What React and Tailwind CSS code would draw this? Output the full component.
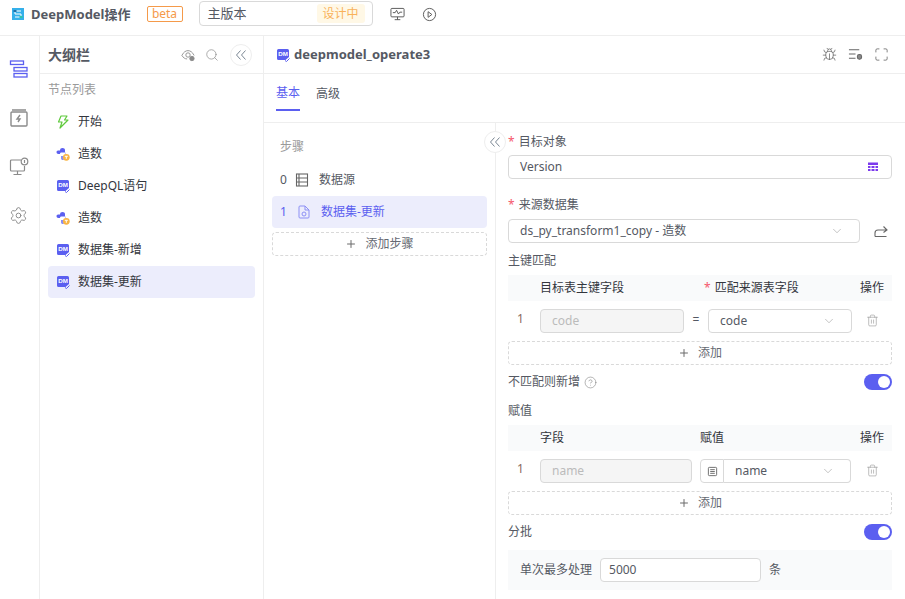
import React from "react";
import { Search, ChevronDown, Plus, Trash2, Settings, CircleHelp, Maximize, Bug, Share } from "lucide-react";

const DM = ({ c = "" }) => (
  <svg viewBox="0 0 14 14" className={"w-[14px] h-[14px] shrink-0 " + c}>
    <path d="M2.5 1h9A1.5 1.5 0 0 1 13 2.500V9l-3.500 3H2.500A1.500 1.500 0 0 1 1 10.500v-8A1.500 1.500 0 0 1 2.500 1z" fill="#5b5ff0" />
    <text x="7" y="8.300" textAnchor="middle" fontSize="6.200" fontWeight="700" fill="#fff" fontFamily="Liberation Sans">DM</text>
    <path d="M9 12.500l1.500 1 3-3" fill="none" stroke="#5b5ff0" strokeWidth="1" />
  </svg>
);
const Py = () => (
  <svg viewBox="0 0 14 14" className="w-[14px] h-[14px] shrink-0">
    <path d="M4 3.500C4 1.800 5 1 6.500 1S9 1.800 9 3v2.500H5.500C4.500 5.500 4 6 4 7H2.500C1.200 7 .5 6 .5 5S1.500 3.500 2.500 3.500z" fill="#5b5ff0" />
    <path d="M9.500 5.500v2c0 1-.5 1.500-1.500 1.500H5v2.200C5 12.300 5.800 13 6.800 13c.4 0 .8-.1 1.200-.3C7.500 12 7.500 9 10 8.200V5.500z" fill="#8b8ef5" />
    <circle cx="10.300" cy="10.300" r="3.400" fill="#f8b444" />
    <path d="M8.800 9.300h3M10.300 9.300v2.500" stroke="#fff" strokeWidth="1" />
  </svg>
);
const Bolt = () => (
  <svg viewBox="0 0 14 14" className="w-[14px] h-[14px] shrink-0" fill="none" stroke="#5fc93c" strokeWidth="1.200" strokeLinejoin="round">
    <path d="M5 1h6L8.500 5H12l-8 8 2-6H2.500z" />
  </svg>
);
const Required = () => <span className="text-[#f5576c] mr-[4px] text-[12px]">*</span>;

const AddRow = ({ label = "添加", cls = "w-full" }) => (
  <div className={"h-[24px] border border-dashed border-[#d9d9d9] rounded-[4px] flex items-center justify-center gap-[8px] text-[#666a73] text-[12px] " + cls}>
    <Plus size={12} strokeWidth={2} className="text-[#6b6b6b]" />
    <span>{label}</span>
  </div>
);
const Toggle = () => (
  <div className="w-[28px] h-[16px] rounded-full bg-[#5b5ff0] flex items-center justify-end pr-[2px]">
    <div className="w-[12px] h-[12px] rounded-full bg-white" />
  </div>
);
const Collapse = ({ cls = "" }) => (
  <div className={"w-[22px] h-[22px] rounded-full border border-[#eeeeee] bg-white flex items-center justify-center " + cls}>
    <svg viewBox="0 0 12 12" className="w-[12px] h-[12px]" fill="none" stroke="#7b8794" strokeWidth="1">
      <path d="M5.500 1.500L1.500 6l4 4.500M10.500 1.500L6.500 6l4 4.500" />
    </svg>
  </div>
);
const Trash = () => <Trash2 size={13} strokeWidth={1.2} className="text-[#9a9a9a]" />;
const Chev = () => <ChevronDown size={14} strokeWidth={1} className="text-[#9a9a9a]" />;

const NavItem = ({ icon, label, active }) => (
  <div className={"h-[32px] flex items-center pl-[8px] rounded-[4px] text-[12px] text-[#33363d] " + (active ? "bg-[#ecedfc]" : "")}>
    <span className="w-[22px] flex">{icon}</span>
    <span>{label}</span>
  </div>
);

export default function App() {
  return (
    <div className="w-[905px] h-[599px] overflow-hidden bg-white text-[#555963] text-[12px] font-['Noto_Sans','Noto_Sans_CJK_SC',sans-serif] flex flex-col">
      {/* top bar */}
      <div className="h-[36px] shrink-0 border-b border-[#eeeeee] flex items-start pl-[12px] pt-[1px]">
        <svg viewBox="0 0 12 12" className="w-[12px] h-[12px] mt-[7px] shrink-0">
          <rect width="12" height="12" fill="#35b0ea" />
          <path d="M3 3h6M3 3v3h6v3H3" fill="none" stroke="#fff" strokeWidth="1" />
          <rect x="1.500" y="2" width="3" height="2" fill="#1c6fa8" />
          <rect x="7.500" y="8" width="3" height="2" fill="#2fc5a8" />
        </svg>
        <span className="ml-[7px] mt-[3px] text-[13px] font-bold leading-[20px] text-[#555963]">DeepModel操作</span>
        <span className="ml-[16px] mt-[5px] w-[36px] h-[16px] border border-[#f59a4a] rounded-[2px] text-[#f59a4a] text-[12px] leading-[14px] flex items-center justify-center">beta</span>
        <div className="ml-[16px] w-[174px] h-[25px] border border-[#d9d9d9] rounded-[4px] flex items-center justify-between pl-[8px] pr-[7px]">
          <span className="text-[13px] text-[#555963]">主版本</span>
          <span className="w-[48px] h-[19px] bg-[#fff8e6] rounded-[3px] text-[#f9b25a] flex items-center justify-center">设计中</span>
        </div>
        <svg viewBox="0 0 16 16" className="w-[15px] h-[15px] ml-[17px] mt-[6px] shrink-0" fill="none" stroke="#555" strokeWidth="1">
          <rect x="1" y="1.500" width="14" height="9" rx="1" />
          <path d="M3 6h2.500l1.500-2.500 2 4 1.500-2H13M5 13.500h6M8 10.500v3" />
        </svg>
        <svg viewBox="0 0 16 16" className="w-[15px] h-[15px] ml-[17px] mt-[6px] shrink-0" fill="none" stroke="#555" strokeWidth="1">
          <circle cx="8" cy="8" r="6.500" />
          <path d="M6.500 5l4 3-4 3z" />
        </svg>
      </div>

      <div className="flex-1 flex min-h-0">
        {/* rail */}
        <div className="w-[40px] shrink-0 border-r border-[#eeeeee] flex flex-col items-center pt-[23px] gap-[29px]">
          <svg viewBox="0 0 20 20" className="w-[20px] h-[20px] ml-[-2px]" fill="none" stroke="#5b5ff0" strokeWidth="1.300">
            <rect x="1.500" y="2" width="13" height="3.500" />
            <rect x="5" y="8.500" width="13" height="3.500" />
            <rect x="5" y="14.500" width="13" height="3.500" />
          </svg>
          <svg viewBox="0 0 20 20" className="w-[20px] h-[20px] ml-[-2px]" fill="none" stroke="#8a8a8a" strokeWidth="1.400">
            <path d="M3 2h14M2 5a1 1 0 0 1 1-1h14a1 1 0 0 1 1 1v12a1 1 0 0 1-1 1H3a1 1 0 0 1-1-1z" />
            <path d="M11 7l-3 4h3l-2 3" />
          </svg>
          <svg viewBox="0 0 20 20" className="w-[20px] h-[20px] ml-[-2px]" fill="none" stroke="#8a8a8a" strokeWidth="1.200">
            <path d="M12 3H2.500a1 1 0 0 0-1 1v9a1 1 0 0 0 1 1h12a1 1 0 0 0 1-1V9M8.500 14v3.500M4.500 17.500h8" />
            <circle cx="15.500" cy="4.500" r="3.300" />
            <path d="M15.500 3v3" />
          </svg>
          <Settings size={19} strokeWidth={1.200} className="text-[#8a8a8a] ml-[-2px]" />
        </div>

        {/* outline */}
        <div className="w-[224px] shrink-0 border-r border-[#eeeeee] flex flex-col">
          <div className="h-[38px] shrink-0 border-b border-[#eeeeee] flex items-center pl-[8px] pr-[11px]">
            <span className="text-[14px] font-bold text-[#555963]">大纲栏</span>
            <svg viewBox="0 0 16 16" className="w-[14px] h-[14px] ml-auto" fill="none" stroke="#8a8a8a" strokeWidth="1">
              <path d="M1 8.500C3 4.500 5.500 3 8 3s5 1.500 7 5.500" />
              <path d="M1 8.500c1.500 2.500 3.500 4 6 4" />
              <circle cx="8" cy="8" r="2.500" />
              <circle cx="12.500" cy="12" r="2.500" fill="#8a8a8a" />
            </svg>
            <Search size={14} strokeWidth={1.200} className="text-[#8a8a8a] ml-[10px]" />
            <Collapse cls="ml-[11px]" />
          </div>
          <div className="h-[32px] shrink-0 flex items-center pl-[8px] text-[#9a9a9a]">节点列表</div>
          <div className="px-[8px] flex flex-col">
            <NavItem icon={<Bolt />} label="开始" />
            <NavItem icon={<Py />} label="造数" />
            <NavItem icon={<DM />} label="DeepQL语句" />
            <NavItem icon={<Py />} label="造数" />
            <NavItem icon={<DM />} label="数据集-新增" />
            <NavItem icon={<DM />} label="数据集-更新" active />
          </div>
        </div>

        {/* main */}
        <div className="flex-1 min-w-0 flex flex-col">
          <div className="h-[38px] shrink-0 border-b border-[#eeeeee] flex items-center pl-[12px] pr-[16px]">
            <DM c="mr-[4px]" />
            <span className="text-[13px] font-bold text-[#555963]">deepmodel_operate3</span>
            <Bug size={15} strokeWidth={1.200} className="ml-auto text-[#666]" />
            <svg viewBox="0 0 16 16" className="w-[15px] h-[15px] ml-[11px]" fill="none" stroke="#666" strokeWidth="1.100">
              <path d="M1 3h11M1 7.500h7M1 12h7" />
              <rect x="10" y="8" width="4.500" height="5" rx="2" fill="#888" />
            </svg>
            <Maximize size={15} strokeWidth={1.300} className="ml-[11px] text-[#666]" />
          </div>
          <div className="h-[49px] shrink-0 border-b border-[#eeeeee] flex pl-[12px] gap-[16px]">
            <div className="h-[37px] border-b-2 border-[#5b5ff0] text-[#5b5ff0] flex items-center pt-[2px]">基本</div>
            <div className="h-[37px] flex items-center pt-[2px] text-[#555963]">高级</div>
          </div>
          <div className="flex-1 flex min-h-0">
            {/* steps */}
            <div className="w-[232px] shrink-0 border-r border-[#eeeeee] relative px-[8px] pt-[8px]">
              <Collapse cls="absolute right-[-11px] top-[8px]" />
              <div className="h-[32px] flex items-center pl-[8px] text-[#9a9a9a]">步骤</div>
              <div className="h-[33px] flex items-center pl-[8px] text-[#555963]">
                <span className="w-[14px]">0</span>
                <svg viewBox="0 0 14 14" className="w-[14px] h-[14px] mr-[10px] ml-[1px]" fill="none" stroke="#666" strokeWidth="1.100">
                  <rect x="1.500" y="1" width="11" height="12" />
                  <path d="M1.500 5h11M1.500 9h11M4 1v12" />
                </svg>
                <span>数据源</span>
              </div>
              <div className="h-[32px] bg-[#ecedfc] rounded-[4px] flex items-center pl-[8px] text-[#5b5ff0]">
                <span className="w-[15px]">1</span>
                <svg viewBox="0 0 14 14" className="w-[14px] h-[14px] mr-[10px] ml-[2px]" fill="none" stroke="#8d90f5" strokeWidth="1">
                  <path d="M2 2a1 1 0 0 1 1-1h5l4 4v7a1 1 0 0 1-1 1H3a1 1 0 0 1-1-1zM8 1v4h4" />
                  <circle cx="7" cy="9" r="2" />
                </svg>
                <span>数据集-更新</span>
              </div>
              <AddRow label="添加步骤" cls="w-full mt-[4px]" />
            </div>

            {/* form */}
            <div className="flex-1 min-w-0 pl-[12px] pr-[13px] pt-[10px] flex flex-col text-[#555963]">
              <div className="h-[18px] flex items-center"><Required />目标对象</div>
              <div className="mt-[4px] h-[24px] border border-[#d9d9d9] rounded-[4px] flex items-center justify-between pl-[11px] pr-[12px]">
                <span>Version</span>
                <svg viewBox="0 0 12 12" className="w-[12px] h-[12px]">
                  <rect x="1" y="1.500" width="10" height="2.500" fill="#7c3aed" />
                  <path d="M1 5h2.500v2H1zM4.500 5h3v2h-3zM8.500 5H11v2H8.500zM1 8h2.500v2H1zM4.500 8h3v2h-3zM8.500 8H11v2H8.500z" fill="#7c3aed" />
                </svg>
              </div>
              <div className="mt-[17px] h-[18px] flex items-center"><Required />来源数据集</div>
              <div className="mt-[5px] flex items-center">
                <div className="w-[352px] h-[24px] border border-[#d9d9d9] rounded-[4px] flex items-center justify-between pl-[11px] pr-[15px]">
                  <span>ds_py_transform1_copy - 造数</span>
                  <Chev />
                </div>
                <svg viewBox="0 0 14 14" className="w-[14px] h-[14px] ml-[14px]" fill="none" stroke="#666" strokeWidth="1.100">
                  <path d="M1 12.500V9c0-2 1.500-3 3-3h8.500M9.500 2.500l3.500 3.500-3.500 2.500M1 12.500h11.500" />
                </svg>
              </div>
              <div className="mt-[9px] h-[18px] flex items-center">主键匹配</div>
              <div className="mt-[5px] h-[26px] bg-[#f9fafb] flex items-center text-[#33363d]">
                <span className="ml-[32px] w-[164px]">目标表主键字段</span>
                <span><span className="text-[#f5576c] mr-[4px]">*</span>匹配来源表字段</span>
                <span className="ml-auto mr-[8px]">操作</span>
              </div>
              <div className="mt-[8px] h-[24px] flex items-center">
                <span className="w-[32px] pl-[9px] pb-[4px] text-[#8a6b5f]">1</span>
                <div className="w-[144px] h-[24px] border border-[#d9d9d9] bg-[#f5f5f5] rounded-[4px] flex items-center pl-[11px] text-[#bbbbbb]">code</div>
                <span className="w-[24px] text-center pb-[2px]">=</span>
                <div className="w-[144px] h-[24px] border border-[#d9d9d9] rounded-[4px] flex items-center justify-between pl-[11px] pr-[15px]">
                  <span>code</span><Chev />
                </div>
                <span className="ml-[14px] pb-[2px]"><Trash /></span>
              </div>
              <AddRow cls="w-full mt-[8px]" />
              <div className="mt-[8px] h-[18px] flex items-center">
                不匹配则新增
                <CircleHelp size={13} strokeWidth={1} className="ml-[4px] text-[#777]" />
                <span className="ml-auto"><Toggle /></span>
              </div>
              <div className="mt-[11px] h-[18px] flex items-center">赋值</div>
              <div className="mt-[5px] h-[26px] bg-[#f9fafb] flex items-center text-[#33363d]">
                <span className="ml-[32px] w-[160px]">字段</span>
                <span>赋值</span>
                <span className="ml-auto mr-[8px]">操作</span>
              </div>
              <div className="mt-[8px] h-[24px] flex items-center">
                <span className="w-[32px] pl-[9px] pb-[4px] text-[#8a6b5f]">1</span>
                <div className="w-[152px] h-[24px] border border-[#d9d9d9] bg-[#f5f5f5] rounded-[4px] flex items-center pl-[11px] text-[#bbbbbb]">name</div>
                <div className="ml-[8px] w-[24px] h-[24px] border border-[#d9d9d9] rounded-l-[4px] flex items-center justify-center">
                  <svg viewBox="0 0 12 12" className="w-[11px] h-[11px]" fill="none" stroke="#666" strokeWidth="1">
                    <rect x="1.500" y="1.500" width="9" height="9" rx="1" />
                    <path d="M3.500 4h5M3.500 6h5M3.500 8h5" />
                  </svg>
                </div>
                <div className="w-[127px] h-[24px] border border-[#d9d9d9] border-l-0 rounded-r-[4px] flex items-center justify-between pl-[11px] pr-[15px]">
                  <span>name</span><Chev />
                </div>
                <span className="ml-[15px] pb-[2px]"><Trash /></span>
              </div>
              <AddRow cls="w-full mt-[8px]" />
              <div className="mt-[8px] h-[18px] flex items-center justify-between">
                分批<Toggle />
              </div>
              <div className="mt-[9px] h-[40px] bg-[#f9fafb] flex items-center pl-[12px]">
                <span>单次最多处理</span>
                <div className="ml-[8px] w-[161px] h-[24px] bg-white border border-[#d9d9d9] rounded-[4px] flex items-center pl-[8px]">5000</div>
                <span className="ml-[8px]">条</span>
              </div>
            </div>
          </div>
        </div>
      </div>
    </div>
  );
}
